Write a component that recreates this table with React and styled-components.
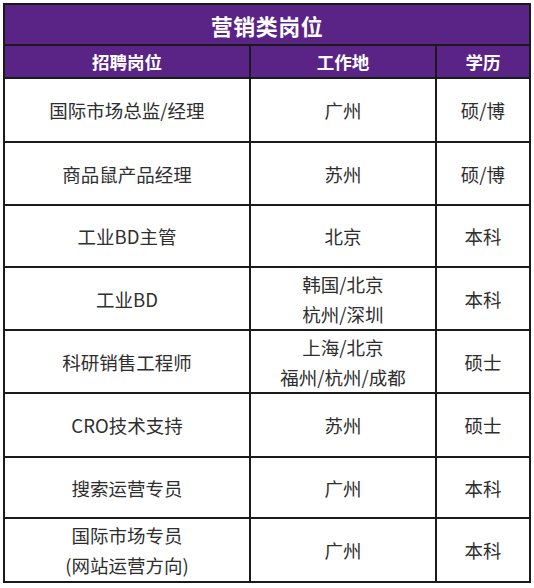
import React from "react";
import styled, { createGlobalStyle } from "styled-components";

const Global = createGlobalStyle`
  html, body { margin: 0; padding: 0; background: #ffffff; }
  body { font-family: "Microsoft YaHei", "Noto Sans CJK SC", "Noto Sans", sans-serif; }
`;

const Page = styled.div`
  padding: 3px 0 0 3px;
`;

const Table = styled.table`
  border-collapse: collapse;
  width: 526px;
  table-layout: fixed;
  border: 2px solid #1a1a1a;
`;

const Col = styled.col`
  width: ${(p) => p.$w}px;
`;

const TitleCell = styled.th`
  background: #5a2386;
  color: #ffffff;
  font-size: 22px;
  font-weight: 700;
  height: 39px;
  padding: 0;
  border: 2px solid #1a1a1a;
  text-align: center;
  letter-spacing: 0.5px;
`;

const HeadCell = styled.th`
  background: #5a2386;
  color: #ffffff;
  font-size: 17.5px;
  font-weight: 700;
  height: 31px;
  padding: 0;
  border: 2px solid #1a1a1a;
  text-align: center;
`;

const Cell = styled.td`
  height: ${(p) => p.$h || 61}px;
  padding: 0;
  border: 2px solid #1a1a1a;
  text-align: center;
  vertical-align: middle;
  color: #2e2e2e;
  font-size: 18.5px;
  line-height: 30px;
`;

const Line = styled.div`
  line-height: 30px;
`;

const rows = [
  { pos: ["国际市场总监/经理"], loc: ["广州"], edu: "硕/博", h: 62 },
  { pos: ["商品鼠产品经理"], loc: ["苏州"], edu: "硕/博", h: 61 },
  { pos: ["工业BD主管"], loc: ["北京"], edu: "本科", h: 60 },
  { pos: ["工业BD"], loc: ["韩国/北京", "杭州/深圳"], edu: "本科", h: 61 },
  { pos: ["科研销售工程师"], loc: ["上海/北京", "福州/杭州/成都"], edu: "硕士", h: 61 },
  { pos: ["CRO技术支持"], loc: ["苏州"], edu: "硕士", h: 62 },
  { pos: ["搜索运营专员"], loc: ["广州"], edu: "本科", h: 59 },
  { pos: ["国际市场专员", "(网站运营方向)"], loc: ["广州"], edu: "本科", h: 62 },
];

export default function App() {
  return (
    <>
      <Global />
      <Page>
        <Table>
          <colgroup>
            <Col $w={246} />
            <Col $w={186} />
            <Col $w={94} />
          </colgroup>
          <thead>
            <tr>
              <TitleCell colSpan={3}>营销类岗位</TitleCell>
            </tr>
            <tr>
              <HeadCell>招聘岗位</HeadCell>
              <HeadCell>工作地</HeadCell>
              <HeadCell>学历</HeadCell>
            </tr>
          </thead>
          <tbody>
            {rows.map((r, i) => (
              <tr key={i}>
                <Cell $h={r.h}>
                  {r.pos.map((t) => (
                    <Line key={t}>{t}</Line>
                  ))}
                </Cell>
                <Cell $h={r.h}>
                  {r.loc.map((t) => (
                    <Line key={t}>{t}</Line>
                  ))}
                </Cell>
                <Cell $h={r.h}>{r.edu}</Cell>
              </tr>
            ))}
          </tbody>
        </Table>
      </Page>
    </>
  );
}
